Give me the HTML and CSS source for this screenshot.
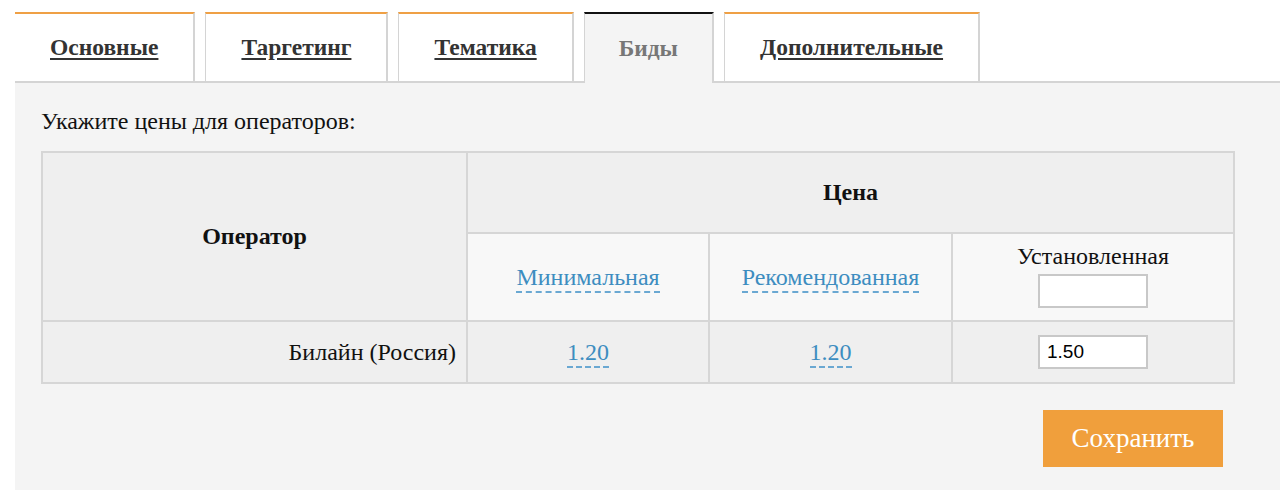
FILE: index.html
```html
<!DOCTYPE html>
<html>
<head>
    <title>Биды</title>
    <link rel="stylesheet" href="styles.css">
</head>
<body>
    <div class="page">
        <ul class="tabs">
            <li class="tab"><a href="#">Основные</a></li>
            <li class="tab"><a href="#">Таргетинг</a></li>
            <li class="tab"><a href="#">Тематика</a></li>
            <li class="tab active"><span>Биды</span></li>
            <li class="tab"><a href="#">Дополнительные</a></li>
        </ul>
        <div class="panel">
            <p class="intro">Укажите цены для операторов:</p>
            <table class="bids">
                <colgroup>
                    <col class="op-col">
                    <col class="min-col">
                    <col class="rec-col">
                    <col>
                </colgroup>
                <tr class="head">
                    <th rowspan="2">Оператор</th>
                    <th colspan="3">Цена</th>
                </tr>
                <tr class="sub">
                    <td><span class="hint">Минимальная</span></td>
                    <td><span class="hint">Рекомендованная</span></td>
                    <td class="set-col">Установленная<input type="text" class="price"></td>
                </tr>
                <tr class="row">
                    <td class="op-name">Билайн (Россия)</td>
                    <td><span class="hint">1.20</span></td>
                    <td><span class="hint">1.20</span></td>
                    <td><input type="text" class="price" value="1.50"></td>
                </tr>
            </table>
            <div class="actions">
                <button type="button" class="save">Сохранить</button>
            </div>
        </div>
    </div>
</body>
</html>
```

FILE: styles.css
```css
body {
    margin: 0;
    background-color: #fff;
    font-family: "Liberation Serif", "Times New Roman", serif;
    color: #111;
}
.page {
    padding: 12px 0 0 15px;
}
.tabs {
    display: flex;
    gap: 10px;
    list-style: none;
    margin: 0;
    padding: 0;
    position: relative;
    z-index: 1;
}
.tab {
    box-sizing: border-box;
    height: 69px;
    padding: 0 35px;
    display: flex;
    align-items: center;
    background-color: #fff;
    border-top: 2px solid #efa045;
    border-left: 1px solid #d4d4d4;
    border-right: 2px solid #d4d4d4;
    font-size: 23.5px;
    font-weight: bold;
}
.tab:first-child {
    border-left: none;
}
.tab a {
    color: #333;
    text-decoration: underline;
    text-underline-offset: 3px;
}
.tab.active {
    height: 71px;
    margin-bottom: -2px;
    padding: 0 34px;
    background-color: #f4f4f4;
    border-top-color: #111;
    color: #777;
}
.panel {
    background-color: #f4f4f4;
    border-top: 2px solid #d4d4d4;
    padding: 25px 45px 23px 26px;
    min-height: 380px;
}
.intro {
    margin: 0 0 16px;
    font-size: 24px;
}
.bids {
    width: 1194px;
    table-layout: fixed;
    border-collapse: collapse;
    font-size: 24px;
}
.op-col {
    width: 425px;
}
.min-col {
    width: 242px;
}
.rec-col {
    width: 243px;
}
.bids th,
.bids td {
    border: 2px solid #d6d6d6;
    text-align: center;
    padding: 0;
}
.head th {
    height: 79px;
    background-color: #efefef;
}
.sub td {
    height: 86px;
    background-color: #f8f8f8;
}
.bids td.set-col {
    height: 77px;
    vertical-align: top;
    line-height: 26px;
    padding-top: 9px;
}
.row td {
    height: 60px;
    background-color: #efefef;
}
.bids td.op-name {
    text-align: right;
    padding-right: 10px;
}
.hint {
    color: #3d8dc0;
    border-bottom: 2px dashed #6aa8d2;
    padding-bottom: 1px;
}
.price {
    box-sizing: border-box;
    width: 110px;
    height: 34px;
    border: 2px solid #c8c8c8;
    background-color: #fff;
    font-family: "Liberation Sans", Arial, sans-serif;
    font-size: 19px;
    padding: 2px 7px;
    vertical-align: middle;
}
.set-col .price {
    display: block;
    margin: 5px auto 0;
}
.actions {
    display: flex;
    justify-content: flex-end;
    padding: 26px 12px 0 0;
}
.save {
    width: 180px;
    height: 57px;
    border: none;
    background-color: #f09f3c;
    color: #fff;
    font-family: "Liberation Serif", "Times New Roman", serif;
    font-size: 27px;
    cursor: pointer;
}
```
